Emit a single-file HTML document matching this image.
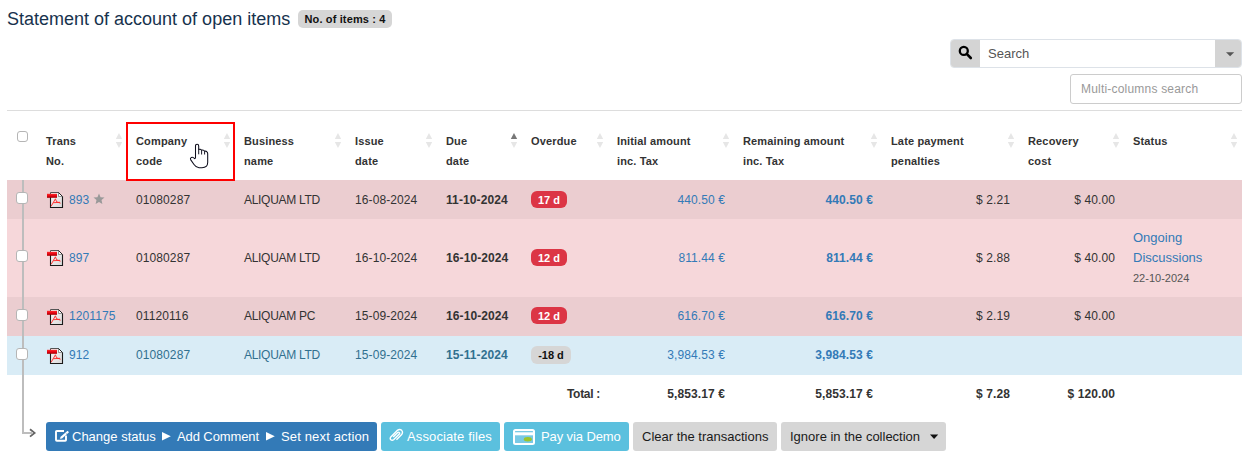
<!DOCTYPE html>
<html><head><meta charset="utf-8">
<style>
*{box-sizing:border-box;margin:0;padding:0}
html,body{width:1250px;height:458px;overflow:hidden;background:#fff;font-family:"Liberation Sans",sans-serif;color:#333;position:relative}
.a{position:absolute;white-space:nowrap}
.title{left:7px;top:8px;font-size:18px;line-height:22px;color:#17324d}
.badge{left:298px;top:10px;width:94px;height:18px;background:#d6d6d6;border-radius:5px;font-size:11px;font-weight:bold;color:#111;letter-spacing:0.13px;line-height:18px;text-align:center}
.sg{left:950px;top:39px;width:292px;height:29px;border:1px solid #dde2e8;border-radius:4px;background:#fff;overflow:hidden}
.sg .l{position:absolute;left:-1px;top:-1px;width:30px;height:29px;background:#d4d4d4}
.sg .r{position:absolute;right:-1px;top:-1px;width:27px;height:29px;background:#d4d4d4}
.sg .t{position:absolute;left:37px;top:1px;line-height:26px;font-size:13px;color:#555}
.mc{left:1070px;top:74px;width:172px;height:30px;border:1px solid #ccc;border-radius:3px;font-size:12px;letter-spacing:0.2px;color:#999;line-height:28px;padding-left:10px}
.hr{left:7px;top:110px;width:1235px;height:1px;background:#ddd}
.cb{width:12px;height:12px;border:1px solid #b5b5b5;border-radius:3px;background:#fff}
.th{font-size:11px;font-weight:bold;line-height:20px;color:#333;letter-spacing:0.15px}
.row{left:7px;width:1235px}
.td{font-size:12px;line-height:14px;letter-spacing:0.1px}
.lk{color:#337ab7}
.inf{color:#31708f}
.b{font-weight:bold}
.lab{height:17px;border-radius:6px;font-size:11px;font-weight:bold;line-height:16px;padding-top:1px;text-align:center;color:#fff;background:#dc3545}
.btn{top:422px;height:29px;border-radius:3px;font-size:13px;line-height:29px;color:#fff}
.bt{top:422px;font-size:13px;line-height:29px;color:#fff}
.caps{letter-spacing:-0.3px}
</style></head><body>
<svg width="0" height="0" style="position:absolute"><defs><linearGradient id="pg" x1="0" y1="0" x2="1" y2="1"><stop offset="0" stop-color="#fafafa"/><stop offset="1" stop-color="#d8d8d8"/></linearGradient><linearGradient id="rb" x1="0" y1="0" x2="0" y2="1"><stop offset="0" stop-color="#ff2a2a"/><stop offset="0.6" stop-color="#e00010"/><stop offset="1" stop-color="#9a0000"/></linearGradient></defs></svg>
<div class="a title">Statement of account of open items</div>
<div class="a badge">No. of items : 4</div>
<div class="a sg"><div class="l"></div><div class="t">Search</div><div class="r"></div></div>
<svg class="a" style="left:956px;top:43px" width="20" height="20" viewBox="0 0 20 20"><circle cx="7.8" cy="7.9" r="4" fill="none" stroke="#000" stroke-width="2.3"/><path d="M10.7,10.9 L14.8,15" stroke="#000" stroke-width="2.6" stroke-linecap="round"/></svg>
<svg class="a" style="left:1226px;top:51.8px" width="9" height="6" viewBox="0 0 9 6"><path d="M0,0.3 H8.2 L4.1,4.3 Z" fill="#555"/></svg>
<div class="a mc">Multi-columns search</div>
<div class="a hr"></div>

<div class="a cb" style="left:17px;top:131px;width:11px;height:11px"></div>
<div class="a th" style="left:46px;top:131px">Trans<br>No.</div>
<div class="a th" style="left:136px;top:131px">Company<br>code</div>
<div class="a th" style="left:244px;top:131px">Business<br>name</div>
<div class="a th" style="left:355px;top:131px">Issue<br>date</div>
<div class="a th" style="left:446px;top:131px">Due<br>date</div>
<div class="a th" style="left:531px;top:131px">Overdue</div>
<div class="a th" style="left:617px;top:131px">Initial amount<br>inc. Tax</div>
<div class="a th" style="left:743px;top:131px">Remaining amount<br>inc. Tax</div>
<div class="a th" style="left:891px;top:131px">Late payment<br>penalties</div>
<div class="a th" style="left:1028px;top:131px">Recovery<br>cost</div>
<div class="a th" style="left:1133px;top:131px">Status</div>
<svg class="a" style="left:115.4px;top:132px" width="8" height="17" viewBox="0 0 8 17"><path d="M0.8,7 L4,1 L7.2,7 Z" fill="#e6e6e6"/><path d="M0.8,10 L4,16 L7.2,10 Z" fill="#e6e6e6"/></svg>
<svg class="a" style="left:223.4px;top:132px" width="8" height="17" viewBox="0 0 8 17"><path d="M0.8,7 L4,1 L7.2,7 Z" fill="#e6e6e6"/><path d="M0.8,10 L4,16 L7.2,10 Z" fill="#e6e6e6"/></svg>
<svg class="a" style="left:334.4px;top:132px" width="8" height="17" viewBox="0 0 8 17"><path d="M0.8,7 L4,1 L7.2,7 Z" fill="#e6e6e6"/><path d="M0.8,10 L4,16 L7.2,10 Z" fill="#e6e6e6"/></svg>
<svg class="a" style="left:424.9px;top:132px" width="8" height="17" viewBox="0 0 8 17"><path d="M0.8,7 L4,1 L7.2,7 Z" fill="#e6e6e6"/><path d="M0.8,10 L4,16 L7.2,10 Z" fill="#e6e6e6"/></svg>
<svg class="a" style="left:510.4px;top:132px" width="8" height="17" viewBox="0 0 8 17"><path d="M0.8,7 L4,1 L7.2,7 Z" fill="#777"/><path d="M0.8,10 L4,16 L7.2,10 Z" fill="#e6e6e6"/></svg>
<svg class="a" style="left:595.9px;top:132px" width="8" height="17" viewBox="0 0 8 17"><path d="M0.8,7 L4,1 L7.2,7 Z" fill="#e6e6e6"/><path d="M0.8,10 L4,16 L7.2,10 Z" fill="#e6e6e6"/></svg>
<svg class="a" style="left:722.4px;top:132px" width="8" height="17" viewBox="0 0 8 17"><path d="M0.8,7 L4,1 L7.2,7 Z" fill="#e6e6e6"/><path d="M0.8,10 L4,16 L7.2,10 Z" fill="#e6e6e6"/></svg>
<svg class="a" style="left:870.4px;top:132px" width="8" height="17" viewBox="0 0 8 17"><path d="M0.8,7 L4,1 L7.2,7 Z" fill="#e6e6e6"/><path d="M0.8,10 L4,16 L7.2,10 Z" fill="#e6e6e6"/></svg>
<svg class="a" style="left:1006.9px;top:132px" width="8" height="17" viewBox="0 0 8 17"><path d="M0.8,7 L4,1 L7.2,7 Z" fill="#e6e6e6"/><path d="M0.8,10 L4,16 L7.2,10 Z" fill="#e6e6e6"/></svg>
<svg class="a" style="left:1111.9px;top:132px" width="8" height="17" viewBox="0 0 8 17"><path d="M0.8,7 L4,1 L7.2,7 Z" fill="#e6e6e6"/><path d="M0.8,10 L4,16 L7.2,10 Z" fill="#e6e6e6"/></svg>
<svg class="a" style="left:1229.9px;top:132px" width="8" height="17" viewBox="0 0 8 17"><path d="M0.8,7 L4,1 L7.2,7 Z" fill="#e6e6e6"/><path d="M0.8,10 L4,16 L7.2,10 Z" fill="#e6e6e6"/></svg>
<div class="a" style="left:126px;top:122px;width:109px;height:59px;border:2px solid #fe0000;z-index:5"></div>
<div class="a row" style="top:180px;height:39px;background:#ebcdd0"></div>
<div class="a row" style="top:219px;height:78px;background:#f6d7da"></div>
<div class="a row" style="top:297px;height:39px;background:#ebcdd0"></div>
<div class="a row" style="top:336px;height:39px;background:#d9ecf6"></div>
<div class="a" style="left:22px;top:180px;width:2px;height:254px;background:#bdbdbd"></div>
<div class="a" style="left:22px;top:432px;width:10px;height:2px;background:#bdbdbd"></div>
<svg class="a" style="left:28px;top:426px" width="10" height="13" viewBox="0 0 10 13"><path d="M2,3.2 L6.6,6.9 L2,10.6" fill="none" stroke="#666" stroke-width="1.8"/></svg>
<div class="a cb" style="left:16px;top:192px"></div>
<svg class="a" style="left:47px;top:192px" width="17" height="17" viewBox="0 0 17 17"><path d="M3.5,0.5 H11.5 L15.5,4.5 V15.5 H3.5 Z" fill="url(#pg)" stroke="#555" stroke-width="1"/><path d="M15.5,4.5 V15.5 H3.5 V2" fill="none" stroke="#1a1a1a" stroke-width="1.1"/><path d="M11.5,0.5 V4.5 H15.5 Z" fill="#fff" stroke="#666" stroke-width="0.7"/><path d="M11.5,0.5 L15.5,4.5" stroke="#222" stroke-width="1"/><rect x="0" y="1.8" width="10" height="4" fill="url(#rb)"/><path d="M4.2,14.2 L8.4,6.8 L9.6,9.8 L13.6,11.2 M6.4,10.7 L13,10.3" fill="none" stroke="#f22" stroke-width="0.9"/></svg>
<div class="a td lk" style="left:69px;top:193px">893</div>
<svg class="a" style="left:93px;top:193px" width="12" height="12" viewBox="0 0 24 24"><path d="M12,1 L15.1,8.3 L23,9 L17,14.2 L18.8,22 L12,17.9 L5.2,22 L7,14.2 L1,9 L8.9,8.3 Z" fill="#999"/></svg>
<div class="a td" style="left:136px;top:193px">01080287</div>
<div class="a td caps" style="left:244px;top:193px">ALIQUAM LTD</div>
<div class="a td" style="left:355px;top:193px">16-08-2024</div>
<div class="a td b" style="left:446px;top:193px">11-10-2024</div>
<div class="a lab" style="left:531px;top:191px;width:36px">17 d</div>
<div class="a td lk" style="right:525px;top:193px">440.50 €</div>
<div class="a td lk b" style="right:377px;top:193px">440.50 €</div>
<div class="a td" style="right:240px;top:193px">$ 2.21</div>
<div class="a td" style="right:135px;top:193px">$ 40.00</div>
<div class="a cb" style="left:16px;top:250px"></div>
<svg class="a" style="left:47px;top:250px" width="17" height="17" viewBox="0 0 17 17"><path d="M3.5,0.5 H11.5 L15.5,4.5 V15.5 H3.5 Z" fill="url(#pg)" stroke="#555" stroke-width="1"/><path d="M15.5,4.5 V15.5 H3.5 V2" fill="none" stroke="#1a1a1a" stroke-width="1.1"/><path d="M11.5,0.5 V4.5 H15.5 Z" fill="#fff" stroke="#666" stroke-width="0.7"/><path d="M11.5,0.5 L15.5,4.5" stroke="#222" stroke-width="1"/><rect x="0" y="1.8" width="10" height="4" fill="url(#rb)"/><path d="M4.2,14.2 L8.4,6.8 L9.6,9.8 L13.6,11.2 M6.4,10.7 L13,10.3" fill="none" stroke="#f22" stroke-width="0.9"/></svg>
<div class="a td lk" style="left:69px;top:251px">897</div>
<div class="a td" style="left:136px;top:251px">01080287</div>
<div class="a td caps" style="left:244px;top:251px">ALIQUAM LTD</div>
<div class="a td" style="left:355px;top:251px">16-10-2024</div>
<div class="a td b" style="left:446px;top:251px">16-10-2024</div>
<div class="a lab" style="left:531px;top:249px;width:36px">12 d</div>
<div class="a td lk" style="right:525px;top:251px">811.44 €</div>
<div class="a td lk b" style="right:377px;top:251px">811.44 €</div>
<div class="a td" style="right:240px;top:251px">$ 2.88</div>
<div class="a td" style="right:135px;top:251px">$ 40.00</div>
<div class="a cb" style="left:16px;top:309px"></div>
<svg class="a" style="left:47px;top:309px" width="17" height="17" viewBox="0 0 17 17"><path d="M3.5,0.5 H11.5 L15.5,4.5 V15.5 H3.5 Z" fill="url(#pg)" stroke="#555" stroke-width="1"/><path d="M15.5,4.5 V15.5 H3.5 V2" fill="none" stroke="#1a1a1a" stroke-width="1.1"/><path d="M11.5,0.5 V4.5 H15.5 Z" fill="#fff" stroke="#666" stroke-width="0.7"/><path d="M11.5,0.5 L15.5,4.5" stroke="#222" stroke-width="1"/><rect x="0" y="1.8" width="10" height="4" fill="url(#rb)"/><path d="M4.2,14.2 L8.4,6.8 L9.6,9.8 L13.6,11.2 M6.4,10.7 L13,10.3" fill="none" stroke="#f22" stroke-width="0.9"/></svg>
<div class="a td lk" style="left:69px;top:309px">1201175</div>
<div class="a td" style="left:136px;top:309px">01120116</div>
<div class="a td caps" style="left:244px;top:309px">ALIQUAM PC</div>
<div class="a td" style="left:355px;top:309px">15-09-2024</div>
<div class="a td b" style="left:446px;top:309px">16-10-2024</div>
<div class="a lab" style="left:531px;top:307px;width:36px">12 d</div>
<div class="a td lk" style="right:525px;top:309px">616.70 €</div>
<div class="a td lk b" style="right:377px;top:309px">616.70 €</div>
<div class="a td" style="right:240px;top:309px">$ 2.19</div>
<div class="a td" style="right:135px;top:309px">$ 40.00</div>
<div class="a cb" style="left:16px;top:348px"></div>
<svg class="a" style="left:47px;top:348px" width="17" height="17" viewBox="0 0 17 17"><path d="M3.5,0.5 H11.5 L15.5,4.5 V15.5 H3.5 Z" fill="url(#pg)" stroke="#555" stroke-width="1"/><path d="M15.5,4.5 V15.5 H3.5 V2" fill="none" stroke="#1a1a1a" stroke-width="1.1"/><path d="M11.5,0.5 V4.5 H15.5 Z" fill="#fff" stroke="#666" stroke-width="0.7"/><path d="M11.5,0.5 L15.5,4.5" stroke="#222" stroke-width="1"/><rect x="0" y="1.8" width="10" height="4" fill="url(#rb)"/><path d="M4.2,14.2 L8.4,6.8 L9.6,9.8 L13.6,11.2 M6.4,10.7 L13,10.3" fill="none" stroke="#f22" stroke-width="0.9"/></svg>
<div class="a td lk" style="left:69px;top:348px">912</div>
<div class="a td inf" style="left:136px;top:348px">01080287</div>
<div class="a td caps inf" style="left:244px;top:348px">ALIQUAM LTD</div>
<div class="a td inf" style="left:355px;top:348px">15-09-2024</div>
<div class="a td b inf" style="left:446px;top:348px">15-11-2024</div>
<div class="a lab" style="left:531px;top:346px;width:40px;height:18px;background:#d6d6d6;color:#111">-18 d</div>
<div class="a td lk" style="right:525px;top:348px">3,984.53 €</div>
<div class="a td lk b" style="right:377px;top:348px">3,984.53 €</div>
<div class="a lk" style="left:1133px;top:228px;font-size:13px;line-height:20px">Ongoing<br>Discussions</div>
<div class="a" style="left:1133px;top:271px;font-size:11px;line-height:14px;color:#555">22-10-2024</div>
<div class="a td b" style="right:650px;top:387px;letter-spacing:-0.3px">Total :</div>
<div class="a td b" style="right:525px;top:387px">5,853.17 €</div>
<div class="a td b" style="right:377px;top:387px">5,853.17 €</div>
<div class="a td b" style="right:240px;top:387px">$ 7.28</div>
<div class="a td b" style="right:135px;top:387px">$ 120.00</div>
<div class="a btn" style="left:46px;width:331px;background:#337ab7"></div>
<div class="a bt" style="left:72px">Change status</div>
<div class="a bt" style="left:177px;letter-spacing:-0.1px">Add Comment</div>
<div class="a bt" style="left:281px;letter-spacing:0.15px">Set next action</div>
<svg class="a" style="left:162px;top:432px" width="10" height="9" viewBox="0 0 10 9"><path d="M0,0 L8.8,4.2 L0,8.4 Z" fill="#fff"/></svg>
<svg class="a" style="left:266px;top:432px" width="10" height="9" viewBox="0 0 10 9"><path d="M0,0 L8.8,4.2 L0,8.4 Z" fill="#fff"/></svg>
<svg class="a" style="left:54px;top:429px" width="16" height="14" viewBox="0 0 16 14"><path d="M10,2 H2.8 Q2,2 2,2.8 V11 Q2,11.8 2.8,11.8 H11.2 Q12,11.8 12,11 V6.5" fill="none" stroke="#fff" stroke-width="1.9"/><path d="M5.8,9.8 L8.04,9.38 L15,3.35 L13.6,1.65 L6.64,7.68 Z" fill="#fff"/><path d="M12.3,4.4 L13.1,5.3" stroke="#337ab7" stroke-width="0.6"/></svg>
<div class="a btn" style="left:381px;width:119px;background:#5bc0de;padding-left:26px;letter-spacing:0.12px">Associate files</div>
<svg class="a" style="left:388.3px;top:428.4px" width="16" height="14.1" viewBox="0 0 17 15"><path d="M9,12.5 L14.5,7 Q16.3,4.5 14.5,2.5 Q12.5,0.7 10,2.5 L3,9.5 Q1.7,11.3 3,12.5 Q4.3,13.7 6,12.5 L12,6.5 Q12.8,5.5 12,4.8 Q11.2,4 10.3,4.8 L5.5,9.6" fill="none" stroke="#fff" stroke-width="1.5"/></svg>
<div class="a btn" style="left:504px;width:125px;background:#5bc0de;padding-left:37px;letter-spacing:-0.1px">Pay via Demo</div>
<svg class="a" style="left:513px;top:429px" width="22" height="16" viewBox="0 0 22 16"><rect x="1" y="1" width="20" height="14" rx="1.5" fill="#79c9e5" stroke="#fff" stroke-width="2"/><rect x="2" y="3.3" width="18" height="3" fill="#fff"/><ellipse cx="14.8" cy="10.3" rx="4" ry="2.2" fill="#9dc52d"/></svg>
<div class="a btn" style="left:633px;width:144px;background:#d6d6d6;color:#1a1a1a;padding-left:9px">Clear the transactions</div>
<div class="a btn" style="left:781px;width:165px;background:#d6d6d6;color:#1a1a1a;padding-left:9px">Ignore in the collection</div>
<svg class="a" style="left:930px;top:434px" width="9" height="6" viewBox="0 0 9 6"><path d="M0,0.5 H8.2 L4.1,4.9 Z" fill="#111"/></svg>
<svg class="a" style="left:185px;top:138px" width="30" height="34" viewBox="0 0 30 34"><path d="M10.5,20 L10.5,8 Q10.5,6.3 12.1,6.3 Q13.7,6.3 13.7,8 L13.7,11.5 Q15.6,10.6 16.6,12.2 Q18.8,11.6 19.6,13.3 Q21.6,12.6 22.4,14.6 Q22.7,15.2 22.7,16 L22.7,24.5 Q22.6,29.6 17,29.7 L14,29.7 Q11,29.5 9,26.5 L5.6,21.6 Q4.9,20.2 6.4,19.4 Q8,18.7 9.6,20.6 Z" fill="#fff" stroke="#0e0e1c" stroke-width="1.05" stroke-linejoin="round"/><path d="M13.7,11.5 V16.3 M16.6,12.2 V16.5 M19.6,13.3 V16.5" stroke="#0e0e1c" stroke-width="0.95"/></svg>
</body></html>
